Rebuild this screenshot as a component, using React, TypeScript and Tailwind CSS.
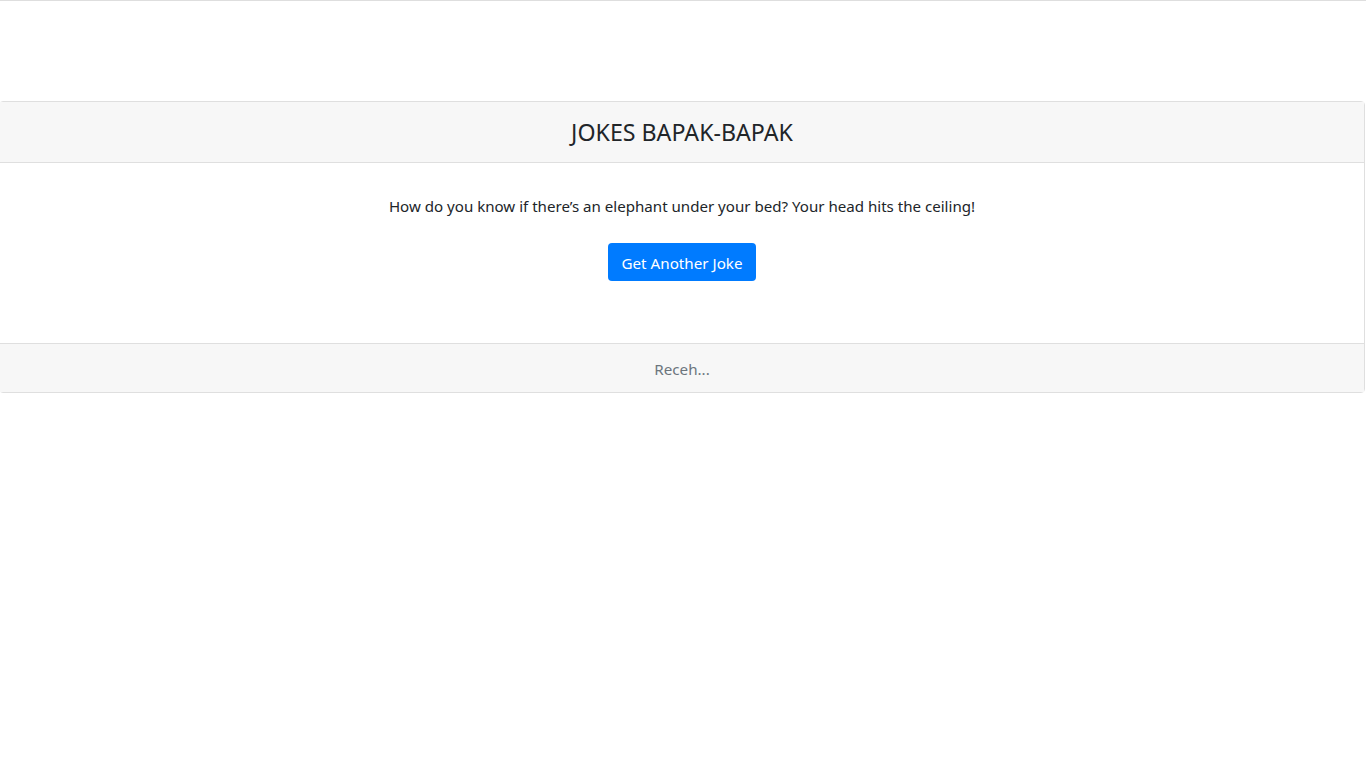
const App = () => {
  return (
    <div
      className="min-h-screen bg-white border-t border-[#dedede] text-[#212529] overflow-hidden"
      style={{ fontFamily: '"Noto Sans", "Open Sans", sans-serif' }}
    >
      <div className="pt-[100px]">
        {/* Card */}
        <div className="w-[1366px] -ml-px border border-[#dfdfdf] rounded-[4px] text-center">
          <div className="bg-[#f7f7f7] border-b border-[#dfdfdf] h-[61px] flex items-center justify-center">
            <h1 className="text-[23.2px] leading-[29px] font-normal">JOKES BAPAK-BAPAK</h1>
          </div>

          <div className="pt-[31px] pb-[62px] flex flex-col items-center">
            <p className="text-[15.1px] leading-[24px]">
              How do you know if there’s an elephant under your bed? Your head hits the ceiling!
            </p>
            <button className="mt-[25px] h-[38px] w-[148px] bg-[#007bff] text-white text-[15.2px] leading-[24px] rounded-[4px] pt-px">
              Get Another Joke
            </button>
          </div>

          <div className="bg-[#f7f7f7] border-t border-[#dfdfdf] h-[49px] pt-[2px] flex items-center justify-center">
            <span className="text-[15.2px] leading-[24px] text-[#6c757d]">Receh...</span>
          </div>
        </div>
      </div>
    </div>
  );
};

export default App;
